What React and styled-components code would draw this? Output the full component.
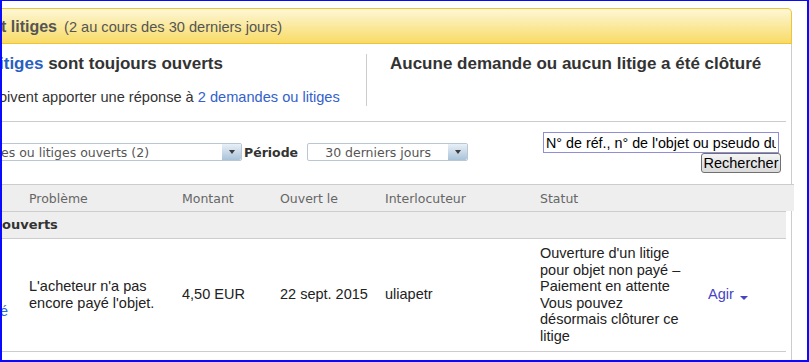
import React from "react";
import styled, { createGlobalStyle } from "styled-components";

const GlobalStyle = createGlobalStyle`
  html, body { margin: 0; padding: 0; background: #fff; }
  body { width: 809px; height: 362px; overflow: hidden; }
`;

const Screen = styled.div`
  position: relative;
  width: 809px;
  height: 362px;
  box-sizing: border-box;
  padding-top: 8px;
  overflow: hidden;
  background: #fff;
  font-family: "Liberation Sans", Arial, sans-serif;
  color: #222;
  &::after {
    content: "";
    position: absolute;
    inset: 0;
    border: 2px solid #0a0aff;
    border-top-width: 1px;
    pointer-events: none;
  }
`;

const Panel = styled.div`
  width: 792px;
`;

const PanelHeader = styled.div`
  height: 36px;
  box-sizing: border-box;
  display: flex;
  align-items: center;
  padding: 1px 0 0 1px;
  border: 1px solid #f0c43a;
  border-left: none;
  border-top-right-radius: 5px;
  background: linear-gradient(#fdf7d6, #f8db66);
  color: #555;
`;

const HeaderTitle = styled.span`
  font-weight: bold;
  font-size: 16px;
`;

const HeaderCount = styled.span`
  font-size: 14.6px;
  margin-left: 7px;
`;

const PanelBody = styled.div`
  border-right: 1px solid #ccc;
  padding-right: 5px;
`;

const Summary = styled.div`
  display: flex;
  padding: 10px 0 15px;
`;

const SummaryCol = styled.div`
  width: ${(p) => p.$width || "auto"};
  flex: ${(p) => (p.$width ? "none" : "1")};
  box-sizing: border-box;
  padding-left: ${(p) => p.$pad || 0}px;
  border-right: ${(p) => (p.$divider ? "1px solid #ccc" : "none")};
`;

const SummaryTitle = styled.div`
  font-weight: bold;
  font-size: 17px;
  line-height: 20px;
  color: #333;
  white-space: nowrap;
  margin-left: ${(p) => p.$shift || 0}px;
`;

const SummaryText = styled.div`
  font-size: 14.6px;
  line-height: 17px;
  color: #333;
  margin-top: 15px;
  margin-left: -1px;
  white-space: nowrap;
`;

const Link = styled.a`
  color: ${(p) => p.$color || "#2a5fc0"};
  text-decoration: none;
  cursor: pointer;
`;

const Filters = styled.div`
  display: flex;
  align-items: flex-start;
  height: 63px;
  box-sizing: border-box;
  border-top: 1px solid #ccc;
  padding-top: 10px;
`;

const FilterGroup = styled.div`
  display: flex;
  align-items: center;
  margin-top: 11px;
`;

const Select = styled.div`
  display: flex;
  width: ${(p) => p.$width}px;
  height: 18px;
  box-sizing: border-box;
  border: 1px solid #b9c6d3;
  border-radius: 2px;
  background: #fff;
`;

const SelectValue = styled.div`
  flex: 1;
  overflow: hidden;
  white-space: nowrap;
  font-family: "DejaVu Sans", Verdana, sans-serif;
  font-size: 12.5px;
  line-height: 17px;
  color: #555;
  text-align: ${(p) => p.$align || "left"};
  padding-left: ${(p) => p.$pad || 0}px;
`;

const SelectArrow = styled.div`
  width: 19px;
  display: flex;
  align-items: center;
  justify-content: center;
  background: linear-gradient(#e9f0f7, #a9c2d9);
  border-radius: 0 2px 2px 0;
  &::before {
    content: "";
    border-left: 3.5px solid transparent;
    border-right: 3.5px solid transparent;
    border-top: 4px solid #3c3c3c;
  }
`;

const FilterLabel = styled.span`
  font-family: "DejaVu Sans", Verdana, sans-serif;
  font-weight: bold;
  font-size: 12.5px;
  color: #333;
  margin: 0 9px 0 2px;
`;

const Search = styled.div`
  margin-left: auto;
  margin-right: 5px;
  display: flex;
  flex-direction: column;
  align-items: flex-end;
`;

const SearchInput = styled.input`
  width: 236px;
  height: 21px;
  box-sizing: border-box;
  margin: 0 2px 0 0;
  padding: 0 2px;
  border: 1px solid #8f8fd8;
  font-family: "Liberation Sans", Arial, sans-serif;
  font-size: 14.3px;
  color: #000;
  outline: none;
`;

const SearchButton = styled.button`
  width: 80px;
  height: 20px;
  box-sizing: border-box;
  padding: 0;
  border: 1px solid #707070;
  border-radius: 3px;
  background: linear-gradient(#f4f4f4, #dadada);
  font-family: "Liberation Sans", Arial, sans-serif;
  font-size: 14.5px;
  color: #000;
`;

const columns = "29px 153px 98px 105px 155px 168px 1fr";

const HeadRow = styled.div`
  display: grid;
  grid-template-columns: ${columns};
  align-items: center;
  height: 27px;
  box-sizing: border-box;
  margin-right: -8px;
  border-top: 1px solid #ccc;
  background: #eee;
  font-family: "DejaVu Sans", Verdana, sans-serif;
  font-size: 12.5px;
  color: #666;
`;

const GroupRow = styled.div`
  height: 28px;
  box-sizing: border-box;
  padding: 3px 0 0 2px;
  border-top: 1px solid #ccc;
  border-bottom: 1px solid #ccc;
  background: #eee;
  font-family: "DejaVu Sans", Verdana, sans-serif;
  font-weight: bold;
  font-size: 13px;
  line-height: 20px;
  color: #333;
`;

const DataRow = styled.div`
  display: grid;
  grid-template-columns: ${columns};
  padding: 6px 0;
  border-bottom: 1px solid #ccc;
  font-size: 14.5px;
  line-height: 16.6px;
  color: #222;
`;

const Cell = styled.div`
  align-self: center;
  padding-right: ${(p) => p.$pr || 0}px;
  margin-top: ${(p) => p.$mt || 0}px;
`;

const Caret = styled.span`
  display: inline-block;
  margin-left: 6px;
  vertical-align: -1px;
  border-left: 4px solid transparent;
  border-right: 4px solid transparent;
  border-top: 4px solid #4545c4;
`;

function Row({ lead, problem, amount, date, user, status }) {
  return (
    <DataRow>
      <Cell $mt={33}>
        <Link $color="#2f6bd0">{lead}</Link>
      </Cell>
      <Cell $pr={18}>{problem}</Cell>
      <Cell>{amount}</Cell>
      <Cell>{date}</Cell>
      <Cell>{user}</Cell>
      <Cell $pr={20}>{status}</Cell>
      <Cell>
        <Link $color="#4545c4">
          Agir
          <Caret />
        </Link>
      </Cell>
    </DataRow>
  );
}

const statusText = (
  <>
    Ouverture d'un litige pour objet non payé – Paiement en attente
    <br />
    Vous pouvez désormais clôturer ce litige
  </>
);

export default function App() {
  return (
    <>
      <GlobalStyle />
      <Screen>
        <Panel>
          <PanelHeader>
            <HeaderTitle>t litiges</HeaderTitle>
            <HeaderCount>(2 au cours des 30 derniers jours)</HeaderCount>
          </PanelHeader>
          <PanelBody>
            <Summary>
              <SummaryCol $width="367px" $divider>
                <SummaryTitle $shift={-1}>
                  <Link>itiges</Link> sont toujours ouverts
                </SummaryTitle>
                <SummaryText>
                  oivent apporter une réponse à <Link $color="#3461cc">2 demandes ou litiges</Link>
                </SummaryText>
              </SummaryCol>
              <SummaryCol $pad={23}>
                <SummaryTitle>Aucune demande ou aucun litige a été clôturé</SummaryTitle>
              </SummaryCol>
            </Summary>

            <Filters>
              <FilterGroup>
                <Select $width={242}>
                  <SelectValue>es ou litiges ouverts (2)</SelectValue>
                  <SelectArrow />
                </Select>
                <FilterLabel>Période</FilterLabel>
                <Select $width={161}>
                  <SelectValue $align="center">30 derniers jours</SelectValue>
                  <SelectArrow />
                </Select>
              </FilterGroup>
              <Search>
                <SearchInput readOnly value="N° de réf., n° de l'objet ou pseudo du membre" />
                <SearchButton type="button">Rechercher</SearchButton>
              </Search>
            </Filters>

            <HeadRow>
              <span />
              <span>Problème</span>
              <span>Montant</span>
              <span>Ouvert le</span>
              <span>Interlocuteur</span>
              <span>Statut</span>
              <span />
            </HeadRow>
            <GroupRow>ouverts</GroupRow>
            <Row
              lead="é"
              problem="L'acheteur n'a pas encore payé l'objet."
              amount="4,50 EUR"
              date="22 sept. 2015"
              user="uliapetr"
              status={statusText}
            />
            <Row
              lead="é"
              problem="L'acheteur n'a pas encore payé l'objet."
              amount="4,50 EUR"
              date="22 sept. 2015"
              user="uliapetr"
              status={statusText}
            />
          </PanelBody>
        </Panel>
      </Screen>
    </>
  );
}
